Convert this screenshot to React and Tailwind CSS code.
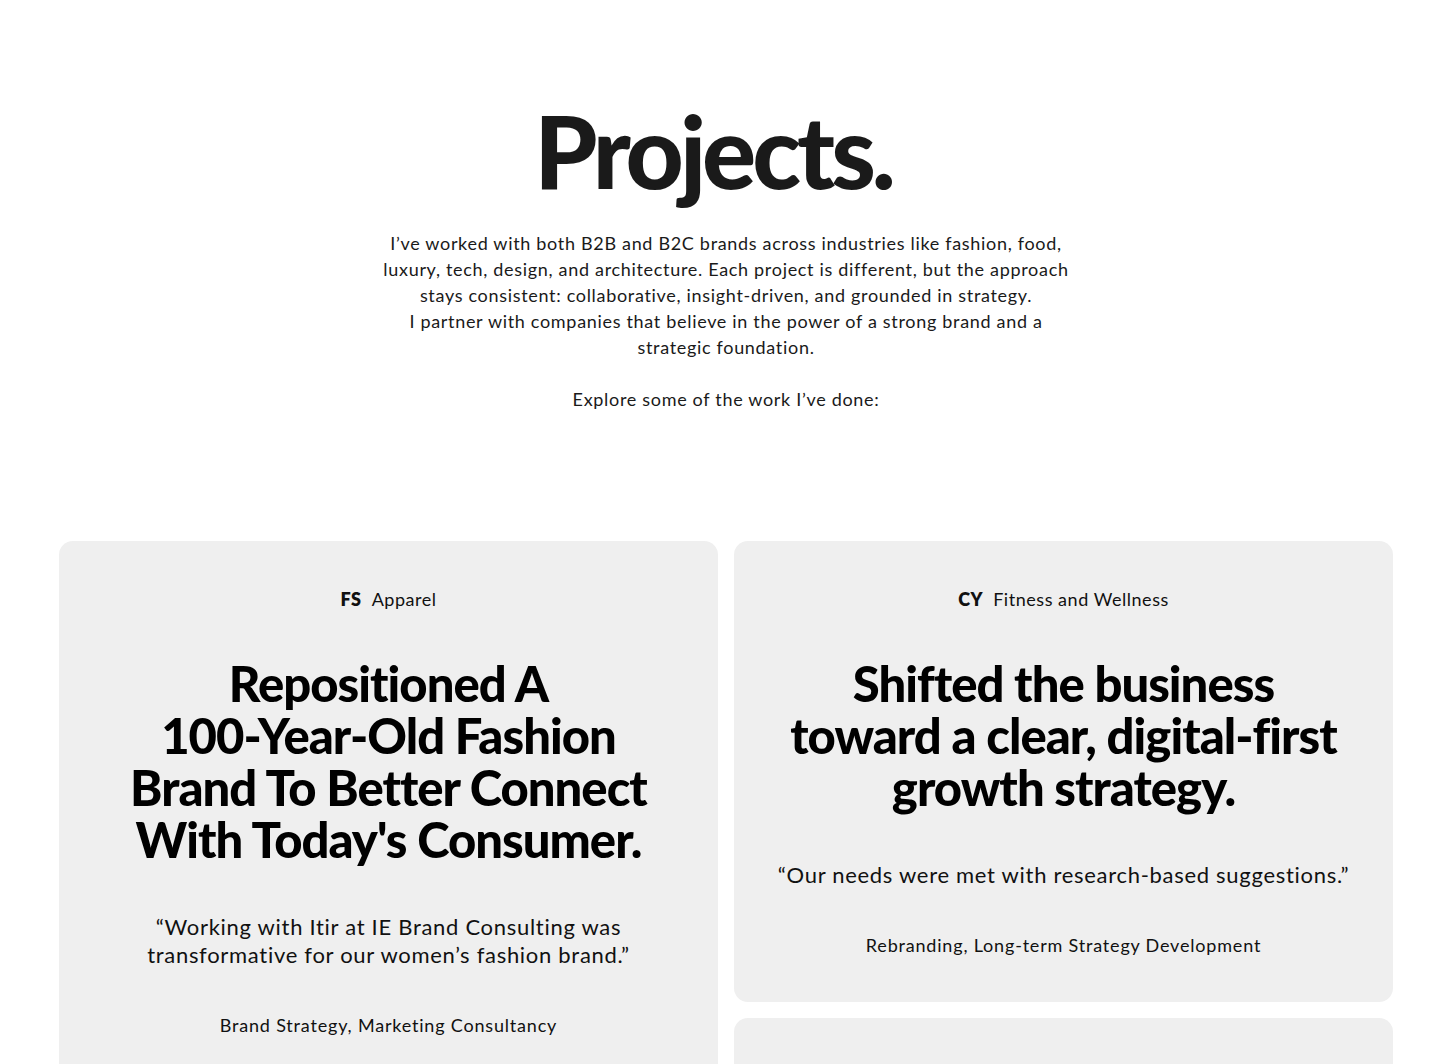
import React from "react";

const heading = { fontFamily: '"Lato", "Open Sans", sans-serif' };

function Card({ code, category, title, quote, services, className = "" }) {
  return (
    <div className={"flex flex-col items-center rounded-[14px] bg-[#efefef] px-6 pt-[45px] pb-[44px] text-center " + className}>
      <div className="flex items-center gap-[10px] text-[18px] leading-[26px] tracking-[0.03em] text-[#111]">
        <span className="font-extrabold">{code}</span>
        <span>{category}</span>
      </div>
      <h2 className="mt-[45px] text-[49px] font-black leading-[52px] tracking-[-0.02em] text-black">
        {title}
      </h2>
      <p className="mt-[48px] text-[22px] leading-[28px] tracking-[0.032em] text-[#111]">{quote}</p>
      <p className="mt-[43px] text-[18px] leading-[26px] tracking-[0.045em] text-[#111]">{services}</p>
    </div>
  );
}

export default function App() {
  return (
    <div className="min-h-screen bg-white pl-[59px] pr-[53px] text-[#1a1a1a]" style={heading}>
      <section className="flex flex-col items-center pt-[88px] text-center">
        <h1 className="pr-[26px] text-[101px] font-black leading-[124px] tracking-[-0.04em] text-[#1a1a1a]">
          Projects.
        </h1>
        <div className="mt-[18px] text-[18px] leading-[26px] tracking-[0.038em] text-[#1a1a1a]">
          <p>
            I’ve worked with both B2B and B2C brands across industries like fashion, food,
            <br />
            luxury, tech, design, and architecture. Each project is different, but the approach
            <br />
            stays consistent: collaborative, insight-driven, and grounded in strategy.
            <br />
            I partner with companies that believe in the power of a strong brand and a
            <br />
            strategic foundation.
          </p>
          <p className="mt-[26px]">Explore some of the work I’ve done:</p>
        </div>
      </section>

      <section className="mt-[129px] flex items-start gap-4 pb-16">
        <div className="flex flex-1 flex-col">
          <Card
            code="FS"
            category="Apparel"
            className="min-h-[900px]"
            title={
              <>
                Repositioned A
                <br />
                100-Year-Old Fashion
                <br />
                Brand To Better Connect
                <br />
                With Today's Consumer.
              </>
            }
            quote={
              <>
                “Working with Itir at IE Brand Consulting was
                <br />
                transformative for our women’s fashion brand.”
              </>
            }
            services="Brand Strategy, Marketing Consultancy"
          />
        </div>
        <div className="flex flex-1 flex-col gap-4">
          <Card
            code="CY"
            category="Fitness and Wellness"
            title={
              <>
                Shifted the business
                <br />
                toward a clear, digital-first
                <br />
                growth strategy.
              </>
            }
            quote="“Our needs were met with research-based suggestions.”"
            services="Rebranding, Long-term Strategy Development"
          />
          <Card
            code="AR"
            category="Architecture"
            title={
              <>
                Built a distinct brand
                <br />
                for a design studio.
              </>
            }
            quote="“A thoughtful, strategic partner.”"
            services="Brand Strategy"
          />
        </div>
      </section>
    </div>
  );
}
